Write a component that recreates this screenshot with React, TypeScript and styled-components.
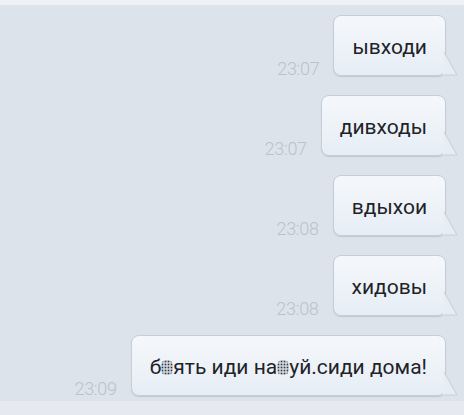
import React from "react";
import styled, { createGlobalStyle } from "styled-components";

const Global = createGlobalStyle`
  html, body { margin: 0; padding: 0; }
  body {
    width: 464px;
    height: 415px;
    overflow: hidden;
    background: #dde3eb;
    font-family: Roboto, "Noto Sans", sans-serif;
  }
`;

const Screen = styled.div`
  width: 464px;
  height: 415px;
  box-sizing: border-box;
  border-top: 5px solid #eef1f5;
  border-bottom: 14px solid #e6eaf0;
  background: #dde3eb;
  display: flex;
  flex-direction: column;
  gap: 19px;
  padding: 10px 18px 0 0;
`;

const Row = styled.div`
  display: flex;
  justify-content: flex-end;
  align-items: flex-end;
  gap: 14px;
`;

const Time = styled.span`
  font-size: 18px;
  font-weight: 300;
  line-height: 14px;
  color: #b8c2ce;
  letter-spacing: -0.3px;
`;

const Bubble = styled.div`
  position: relative;
  height: 61px;
  box-sizing: border-box;
  display: flex;
  align-items: center;
  padding: 3px 18px 0 18px;
  border: 1px solid #c5ced9;
  border-radius: 8px;
  background: linear-gradient(#f5f8fb, #e6edf5);
  box-shadow: 0 1px 1px rgba(120, 135, 155, 0.3);
  font-size: 21px;
  color: #1e2328;
  white-space: nowrap;
`;

const Tail = styled.svg`
  position: absolute;
  right: -14px;
  bottom: -1px;
  width: 16px;
  height: 24px;
  overflow: visible;
`;

const Censor = styled.span`
  display: inline-block;
  width: 12px;
  height: 15px;
  vertical-align: -2px;
  color: transparent;
  background-image:
    radial-gradient(circle, #30343a 0.8px, transparent 1.1px),
    radial-gradient(circle, #9096a0 0.8px, transparent 1.1px);
  background-size: 3px 3px, 3px 3px;
  background-position: 0 0, 1.5px 1.5px;
  border-radius: 40%;
`;

const BubbleTail = () => (
  <Tail viewBox="0 0 16 24">
    <path d="M1 0 L14 23 L0 23 Z" fill="#e7edf5" />
    <path d="M1 0 L14 23 L1 23" fill="none" stroke="#c5ced9" strokeWidth="1" />
  </Tail>
);

type Msg = { time: string; text: React.ReactNode };

const messages: Msg[] = [
  { time: "23:07", text: "ывходи" },
  { time: "23:07", text: "дивходы" },
  { time: "23:08", text: "вдыхои" },
  { time: "23:08", text: "хидовы" },
  {
    time: "23:09",
    text: (
      <>
        б<Censor>*</Censor>ять иди на<Censor>*</Censor>уй.сиди дома!
      </>
    ),
  },
];

export default function App() {
  return (
    <>
      <Global />
      <Screen>
        {messages.map((m, i) => (
          <Row key={i}>
            <Time>{m.time}</Time>
            <Bubble>
              {m.text}
              <BubbleTail />
            </Bubble>
          </Row>
        ))}
      </Screen>
    </>
  );
}
